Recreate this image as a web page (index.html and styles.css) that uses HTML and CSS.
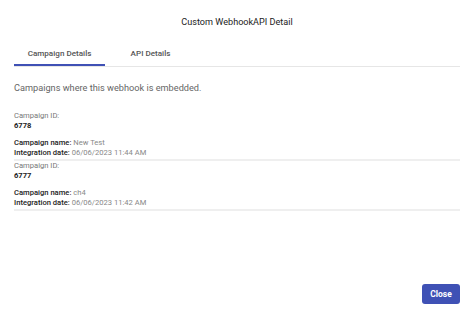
FILE: index.html
```html
<!DOCTYPE html>
<html lang="en">
<head>
    <meta charset="UTF-8">
    <title>Custom WebhookAPI Detail</title>
    <link rel="stylesheet" href="styles.css">
</head>
<body>
    <div class="dialog">
        <div class="dialog-title">Custom WebhookAPI Detail</div>

        <div class="tabs">
            <div class="tab active">Campaign Details</div>
            <div class="tab">API Details</div>
        </div>

        <div class="dialog-content">
            <p class="intro">Campaigns where this webhook is embedded.</p>

            <div class="campaign">
                <div class="label">Campaign ID:</div>
                <div class="campaign-id">6778</div>
                <div class="row"><strong>Campaign name:</strong> New Test</div>
                <div class="row"><strong>Integration date:</strong> 06/06/2023 11:44 AM</div>
            </div>

            <div class="campaign">
                <div class="label">Campaign ID:</div>
                <div class="campaign-id">6777</div>
                <div class="row"><strong>Campaign name:</strong> ch4</div>
                <div class="row"><strong>Integration date:</strong> 06/06/2023 11:42 AM</div>
            </div>
        </div>

        <div class="dialog-actions">
            <button class="btn-close">Close</button>
        </div>
    </div>
</body>
</html>
```

FILE: styles.css
```css
* {
    margin: 0;
    padding: 0;
    box-sizing: border-box;
}

body {
    font-family: Roboto, "Liberation Sans", sans-serif;
    background: #fff;
    width: 474px;
    height: 314px;
    overflow: hidden;
}

.dialog {
    height: 314px;
    padding: 0 14px;
    display: flex;
    flex-direction: column;
}

.dialog-title {
    height: 40px;
    padding-top: 16.5px;
    text-align: center;
    font-size: 9.1px;
    line-height: 11px;
    color: #222;
}

.tabs {
    display: flex;
    border-bottom: 1px solid #e6e6e6;
}

.tab {
    width: 91px;
    height: 26px;
    padding-top: 7.5px;
    text-align: center;
    font-size: 8.1px;
    line-height: 10px;
    font-weight: 500;
    color: #555;
}

.tab.active {
    border-bottom: 2px solid #3f51b5;
    margin-bottom: -1px;
}

.dialog-content {
    flex: 1;
}

.intro {
    margin-top: 14.5px;
    margin-bottom: 18px;
    font-size: 9.2px;
    line-height: 11px;
    color: #666;
}

.campaign {
    border-bottom: 2px solid #efefef;
    padding-bottom: 1px;
}

.label {
    font-size: 7.6px;
    color: #777;
    line-height: 10px;
}

.campaign-id {
    font-size: 7.6px;
    font-weight: 700;
    color: #222;
    line-height: 10px;
    margin-bottom: 7px;
}

.row {
    font-size: 7.6px;
    color: #888;
    line-height: 10px;
}

.row strong {
    font-weight: 500;
    color: #222;
}

.dialog-actions {
    display: flex;
    justify-content: flex-end;
    padding-bottom: 10px;
}

.btn-close {
    width: 38px;
    height: 20px;
    background: #3f51b5;
    color: #fff;
    border: none;
    border-radius: 3px;
    font-family: Roboto, "Liberation Sans", sans-serif;
    font-size: 8.5px;
    font-weight: 700;
}
```
